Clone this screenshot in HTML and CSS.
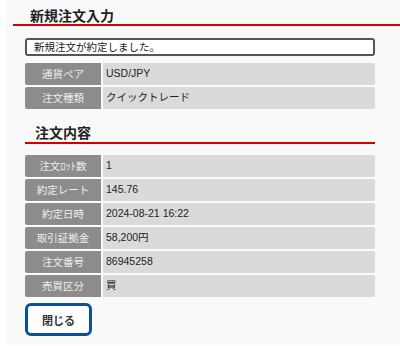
FILE: index.html
```html
<!DOCTYPE html>
<html lang="ja">
  <head>
    <meta charset="UTF-8" />
    <meta name="viewport" content="width=device-width, initial-scale=1.0" />
    <title>新規注文入力</title>
    <link rel="stylesheet" href="styles.css">
  </head>
  <body>
    <div class="panel">
      <h1 class="title">新規注文入力</h1>

      <div class="message">新規注文が約定しました。</div>

      <div class="info-table">
        <div class="row"><div class="label">通貨ペア</div><div class="value">USD/JPY</div></div>
        <div class="row"><div class="label">注文種類</div><div class="value">クイックトレード</div></div>
      </div>

      <h2 class="subtitle">注文内容</h2>

      <div class="info-table">
        <div class="row"><div class="label">注文ﾛｯﾄ数</div><div class="value">1</div></div>
        <div class="row"><div class="label">約定レート</div><div class="value">145.76</div></div>
        <div class="row"><div class="label">約定日時</div><div class="value">2024-08-21 16:22</div></div>
        <div class="row"><div class="label">取引証拠金</div><div class="value">58,200円</div></div>
        <div class="row"><div class="label">注文番号</div><div class="value">86945258</div></div>
        <div class="row"><div class="label">売買区分</div><div class="value">買</div></div>
      </div>

      <button class="close-btn" type="button">閉じる</button>
    </div>
  </body>
</html>
```

FILE: styles.css
```css
html,
body {
  margin: 0;
  background-color: #fff;
}
body {
  font-family: "Liberation Sans", "Noto Sans CJK JP", sans-serif;
  color: #222;
}
.panel {
  margin-left: 6px;
  height: 345px;
  box-sizing: border-box;
  padding: 0 25px 0 19px;
  background-color: #f9f9f9;
  overflow: hidden;
}
/* 見出し */
.title {
  margin: 0 -25px 0 -12px;
  padding: 9px 0 1px 17px;
  font-size: 14px;
  font-weight: 600;
  line-height: 14px;
  color: #222;
  border-bottom: 2px solid #d40000;
}
.subtitle {
  margin: 17px 0 0 0;
  padding: 0 0 2px 10px;
  font-size: 14px;
  font-weight: 600;
  line-height: 14px;
  color: #222;
  border-bottom: 2px solid #d40000;
}
.message {
  margin-top: 12px;
  height: 14px;
  padding: 0 7px;
  border: 2px solid #555;
  border-radius: 3px;
  background-color: #fff;
  font-size: 10.5px;
  line-height: 14px;
}
.info-table {
  display: flex;
  flex-direction: column;
  gap: 2px;
  margin-top: 7px;
}
.subtitle + .info-table {
  margin-top: 11px;
}
.row {
  display: grid;
  grid-template-columns: 76px 1fr;
  gap: 2px;
  height: 22px;
  font-size: 10.5px;
}
.label {
  background-color: #8c8c8c;
  color: #eee;
  text-align: center;
  line-height: 22px;
  border-radius: 2px 0 0 2px;
}
.value {
  background-color: #dadada;
  padding: 3px 0 0 3px;
  line-height: 14px;
  border-radius: 0 2px 2px 0;
}
.close-btn {
  display: block;
  margin-top: 6px;
  width: 67px;
  height: 33px;
  border: 3px solid #0a4f9e;
  border-radius: 6px;
  background-color: #fff;
  color: #333;
  font-family: inherit;
  font-size: 11px;
  font-weight: 600;
  text-align: left;
  padding: 0 0 0 14px;
}
```
